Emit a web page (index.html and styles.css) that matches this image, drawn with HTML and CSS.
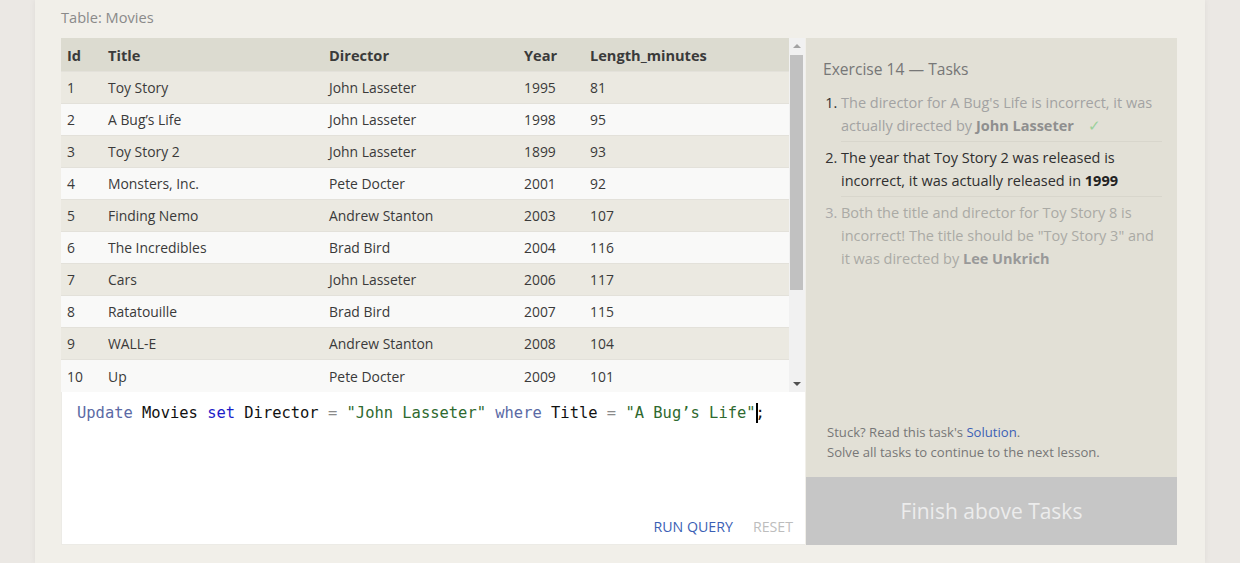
FILE: index.html
```html
<!DOCTYPE html>
<html>
<head>
<meta charset="utf-8">
<link rel="stylesheet" href="styles.css">
</head>
<body>
<div class="page">
  <div class="table-label">Table: Movies</div>
  <div class="workspace">
    <div class="left">
      <div class="viewport">
        <table class="movies">
          <colgroup>
            <col class="c-id"><col class="c-title"><col class="c-dir"><col class="c-year"><col>
          </colgroup>
          <thead>
            <tr><th>Id</th><th>Title</th><th>Director</th><th>Year</th><th>Length_minutes</th></tr>
          </thead>
          <tbody>
            <tr><td>1</td><td>Toy Story</td><td>John Lasseter</td><td>1995</td><td>81</td></tr>
            <tr><td>2</td><td>A Bug’s Life</td><td>John Lasseter</td><td>1998</td><td>95</td></tr>
            <tr><td>3</td><td>Toy Story 2</td><td>John Lasseter</td><td>1899</td><td>93</td></tr>
            <tr><td>4</td><td>Monsters, Inc.</td><td>Pete Docter</td><td>2001</td><td>92</td></tr>
            <tr><td>5</td><td>Finding Nemo</td><td>Andrew Stanton</td><td>2003</td><td>107</td></tr>
            <tr><td>6</td><td>The Incredibles</td><td>Brad Bird</td><td>2004</td><td>116</td></tr>
            <tr><td>7</td><td>Cars</td><td>John Lasseter</td><td>2006</td><td>117</td></tr>
            <tr><td>8</td><td>Ratatouille</td><td>Brad Bird</td><td>2007</td><td>115</td></tr>
            <tr><td>9</td><td>WALL-E</td><td>Andrew Stanton</td><td>2008</td><td>104</td></tr>
            <tr><td>10</td><td>Up</td><td>Pete Docter</td><td>2009</td><td>101</td></tr>
          </tbody>
        </table>
        <div class="scrollbar">
          <div class="arrow up"></div>
          <div class="track"><div class="thumb"></div></div>
          <div class="arrow down"></div>
        </div>
      </div>
      <div class="editor">
        <div class="code"><span class="kw">Update</span> <span class="id">Movies</span> <span class="kw2">set</span> <span class="id">Director</span> <span class="op">=</span> <span class="str">"John Lasseter"</span> <span class="kw">where</span> <span class="id">Title</span> <span class="op">=</span> <span class="str">"A Bug’s Life"</span><span class="cursor"></span><span class="id">;</span></div>
        <div class="actions">
          <span class="run">RUN QUERY</span>
          <span class="reset">RESET</span>
        </div>
      </div>
    </div>
    <div class="panel">
      <div class="tasks">
        <h3 class="tasks-title">Exercise 14 — Tasks</h3>
        <ol class="task-list">
          <li class="done">The director for A Bug's Life is incorrect, it was actually directed by <b>John Lasseter</b> <span class="check">✓</span></li>
          <li class="active">The year that Toy Story 2 was released is incorrect, it was actually released in <b>1999</b></li>
          <li class="todo">Both the title and director for Toy Story 8 is incorrect! The title should be "Toy Story 3" and it was directed by <b>Lee Unkrich</b></li>
        </ol>
        <div class="hint">
          <div>Stuck? Read this task's <span class="link">Solution</span>.</div>
          <div>Solve all tasks to continue to the next lesson.</div>
        </div>
      </div>
      <div class="finish">Finish above Tasks</div>
    </div>
  </div>
</div>
</body>
</html>
```

FILE: styles.css
```css
html, body {
  margin: 0;
  padding: 0;
}
body {
  background: #ebe8e4;
  font-family: "Open Sans", "Liberation Sans", sans-serif;
  color: #333;
  height: 563px;
  overflow: hidden;
}
.page {
  margin-left: 35px;
  width: 1170px;
  height: 563px;
  box-sizing: border-box;
  background: #f1efe9;
  padding: 7px 28px 0 26px;
  box-shadow: 0 0 6px rgba(0, 0, 0, 0.06);
}
.table-label {
  font-size: 14.6px;
  line-height: 20px;
  color: #8a8a8a;
  margin-bottom: 11px;
}
.workspace {
  display: flex;
  gap: 1px;
  height: 507px;
}
.left {
  width: 744px;
  display: flex;
  flex-direction: column;
}
.viewport {
  display: flex;
  height: 354px;
}
.movies {
  width: 728px;
  border-collapse: collapse;
  table-layout: fixed;
  font-size: 13.9px;
}
.c-id { width: 41px; }
.c-title { width: 221px; }
.c-dir { width: 195px; }
.c-year { width: 66px; }
.movies th, .movies td {
  text-align: left;
  padding: 0 0 0 6px;
  white-space: nowrap;
}
.movies thead tr {
  background: #dcdbd0;
  height: 33px;
}
.movies th {
  font-weight: 700;
  font-size: 14.6px;
  color: #3a3a3a;
  padding-top: 2px;
}
.movies tbody tr {
  height: 32.1px;
  border-top: 1px solid #e3e1da;
}
.movies tbody tr:nth-child(odd) { background: #ebe9e1; }
.movies tbody tr:nth-child(even) { background: #f9f9f8; }
.movies td { color: #3a3a3a; }
.scrollbar {
  width: 16px;
  background: #f1f1f1;
  display: flex;
  flex-direction: column;
}
.arrow {
  height: 16px;
  display: flex;
  align-items: center;
  justify-content: center;
}
.arrow::before {
  content: "";
  border-left: 4px solid transparent;
  border-right: 4px solid transparent;
}
.arrow.up::before { border-bottom: 4px solid #a3a3a3; }
.arrow.down::before { border-top: 4px solid #505050; }
.track {
  flex: 1;
  padding: 1px 2px 0 1px;
}
.thumb {
  height: 235px;
  background: #c1c1c1;
}
.editor {
  flex: 1;
  background: #fff;
  display: flex;
  flex-direction: column;
  justify-content: space-between;
  padding: 10px 12px 8px 16px;
  box-shadow: inset 1px 0 0 #ecebe6, inset 0 -1px 0 #ecebe6;
}
.code {
  font-family: "DejaVu Sans Mono", "Liberation Mono", monospace;
  font-size: 15.45px;
  line-height: 22px;
  white-space: pre;
  color: #111;
}
.kw { color: #5b6aa5; }
.kw2 { color: #1c1cc8; }
.op { color: #8a8a8a; }
.str { color: #2f6a2f; }
.id { color: #111; }
.cursor {
  display: inline-block;
  width: 0;
  height: 20px;
  border-left: 2px solid #000;
  vertical-align: -5px;
  margin-right: -2px;
}
.actions {
  display: flex;
  justify-content: flex-end;
  gap: 20px;
  font-size: 14.2px;
  line-height: 20px;
}
.run { color: #3b5fb5; }
.reset { color: #bdbdbd; }
.panel {
  width: 371px;
  display: flex;
  flex-direction: column;
}
.tasks {
  flex: 1;
  background: #e2e0d6;
  padding: 19px 15px 15px 17px;
  display: flex;
  flex-direction: column;
}
.tasks-title {
  margin: 0 0 10px;
  font-size: 15.6px;
  font-weight: 400;
  line-height: 24px;
  color: #777;
}
.task-list {
  margin: 0;
  padding: 0 0 0 18px;
  font-size: 14.5px;
  line-height: 23px;
  flex: 1;
}
.task-list li {
  padding: 0 0 4px;
  margin-bottom: 4px;
  border-bottom: 1px solid #d8d6cc;
}
.task-list li:last-child { border-bottom: none; }
.task-list li::marker { color: #333; }
.done { color: #a3a3a3; }
.done b { color: #8f8f8f; }
.active { color: #2f2f2f; }
.active b { color: #222; }
.todo { color: #aaaaa5; }
.todo b { color: #999; }
.task-list li.todo::marker { color: #aaa; }
.check {
  color: #9bd09b;
  margin-left: 10px;
}
.hint {
  font-size: 13.1px;
  line-height: 20px;
  color: #777;
  padding-left: 4px;
}
.link { color: #3b5fb5; }
.finish {
  height: 68px;
  background: #c6c6c6;
  color: #ececec;
  font-size: 21px;
  display: flex;
  align-items: center;
  justify-content: center;
}
```
